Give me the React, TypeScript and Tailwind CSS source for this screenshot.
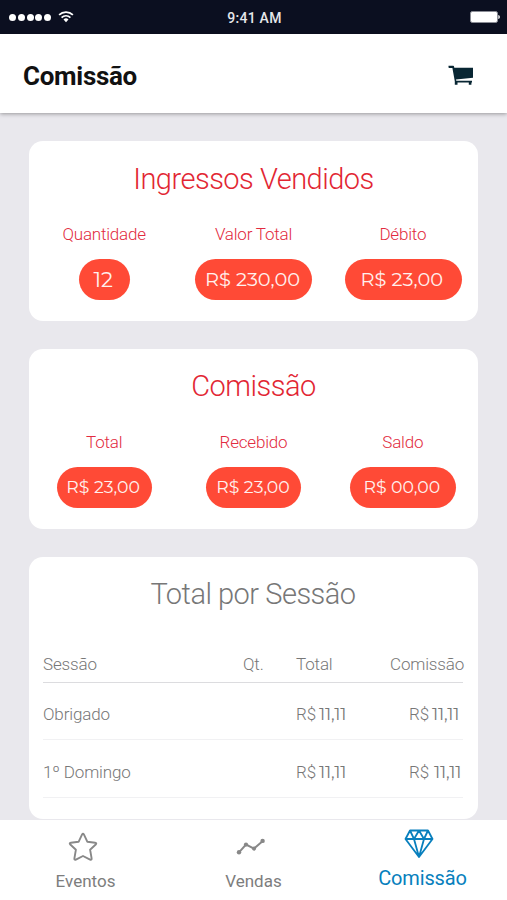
interface Stat {
  label: string;
  value: string;
  pill: string;
}

interface StatCardProps {
  title: string;
  titleClass: string;
  stats: Stat[];
}

interface Session {
  name: string;
  total: string;
  commission: string;
  gap: string;
}

const sold: Stat[] = [
  { label: "Quantidade", value: "12", pill: "w-[51px] text-[21px] pr-[3px]" },
  { label: "Valor Total", value: "R$ 230,00", pill: "w-[117px] text-[19.4px] pr-[3px]" },
  { label: "Débito", value: "R$ 23,00", pill: "w-[117px] text-[19.4px] pr-[3px]" },
];

const commission: Stat[] = [
  { label: "Total", value: "R$ 23,00", pill: "w-[95px] text-[17.3px] pb-0.5 pr-[3px]" },
  { label: "Recebido", value: "R$ 23,00", pill: "w-[95px] text-[17.3px] pb-0.5 pr-[2px]" },
  { label: "Saldo", value: "R$ 00,00", pill: "w-[106px] text-[17.3px] pb-0.5 pr-[3px]" },
];

const sessions: Session[] = [
  { name: "Obrigado", total: "11,11", commission: "11,11", gap: "gap-[3px]" },
  { name: "1º Domingo", total: "11,11", commission: "11,11", gap: "gap-[5px]" },
];

function StatusBar() {
  return (
    <div className="h-[34px] shrink-0 bg-[#0b0f20] grid grid-cols-3 items-center pl-[9px] pr-[7px] text-white">
      <div className="flex items-center gap-[1.75px]">
        {[0, 1, 2, 3, 4].map((dot) => (
          <span key={dot} className="size-[7px] rounded-full bg-white" />
        ))}
        <svg className="ml-[5px] -mt-px" width="16" height="13" viewBox="0 0 16 13" fill="none" stroke="currentColor" strokeWidth="1.7">
          <path d="M1.1 4.9a9.8 9.8 0 0 1 13.8 0" />
          <path d="M3.6 7.6a6.2 6.2 0 0 1 8.8 0" />
          <path d="M8 12.3 5.5 9.6a3.5 3.5 0 0 1 5 0z" fill="currentColor" stroke="none" />
        </svg>
      </div>
      <span className="text-center text-[14px] leading-4 font-medium pt-0.5 tracking-[0.25px] text-[#e6e7ea]">9:41 AM</span>
      <svg className="justify-self-end" width="30" height="12" viewBox="0 0 30 12">
        <rect x="0.5" y="0.5" width="27" height="11" rx="1.8" fill="#fff" stroke="#8b8d96" />
        <path d="M28.3 4v4c2.1-.8 2.1-3.2 0-4z" fill="#fff" />
      </svg>
    </div>
  );
}

function StatCard({ title, titleClass, stats }: StatCardProps) {
  return (
    <section className="h-[180px] shrink-0 bg-white rounded-[14px]">
      <h2 className={`h-[55px] text-center font-light text-[29px] leading-[34px] tracking-[-0.5px] text-[#e22633] ${titleClass}`}>
        {title}
      </h2>
      <div className="grid grid-cols-3 mt-7 pl-px">
        {stats.map((stat) => (
          <div key={stat.label} className="flex flex-col items-center">
            <span className="text-[17px] leading-5 font-light tracking-[-0.2px] text-[#e22b40] pr-px">{stat.label}</span>
            <span
              className={`mt-[15px] h-[41px] rounded-full bg-[#ff4a36] text-[#fff1ee] flex items-center justify-center whitespace-nowrap font-['Montserrat','Inter',sans-serif] ${stat.pill}`}
            >
              {stat.value}
            </span>
          </div>
        ))}
      </div>
    </section>
  );
}

function Amount({ value, gap }: { value: string; gap: string }) {
  return (
    <span className={`flex items-baseline ${gap}`}>
      R$<span className="text-[17px] font-normal font-['Montserrat','Inter',sans-serif]">{value}</span>
    </span>
  );
}

function SessionCard() {
  return (
    <section className="h-[262px] shrink-0 bg-white rounded-[14px] pt-5 pl-[14px] pr-[15px] text-[#777]">
      <h2 className="text-center font-light text-[29px] leading-[34px] tracking-[-0.5px]">Total por Sessão</h2>
      <div className="font-light text-[17px] leading-5 tracking-[-0.15px]">
        <div className="mt-[43px] h-[29px] grid grid-cols-[200px_53px_94px_1fr] border-b border-[#dcdcdf] whitespace-nowrap">
          <span>Sessão</span>
          <span>Qt.</span>
          <span>Total</span>
          <span>Comissão</span>
        </div>
        {sessions.map((session, i) => (
          <div
            key={session.name}
            className={`grid grid-cols-[253px_113px_1fr] items-center pt-[6px] border-b border-[#f1f1f3] whitespace-nowrap ${
              i === 0 ? "h-[57px]" : "h-[58px]"
            }`}
          >
            <span>{session.name}</span>
            <Amount value={session.total} gap="gap-[3px]" />
            <Amount value={session.commission} gap={session.gap} />
          </div>
        ))}
      </div>
    </section>
  );
}

function TabBar() {
  return (
    <nav className="h-20 shrink-0 bg-white grid grid-cols-3 text-[17px] leading-5 text-[#7d7d7d]">
      <div className="flex flex-col items-center pt-3 pl-0.5">
        <svg className="-ml-[6px]" width="30" height="30" viewBox="0 0 30 30" fill="none" stroke="#888" strokeWidth="1.9" strokeLinejoin="round">
          <path d="M14 2.6q1-1.9 2 0l3.4 7.2 7.7.9q2 .3.6 1.8l-5.6 5.2 1.5 8.6q.3 2-1.5 1.3L15 24l-7.1 3.6q-1.8.7-1.5-1.3l1.5-8.6-5.6-5.2q-1.4-1.5.6-1.8l7.7-.9z" />
        </svg>
        <span className="mt-[9px]">Eventos</span>
      </div>
      <div className="flex flex-col items-center pt-[17px]">
        <svg className="-ml-[7px]" width="30" height="20" viewBox="0 0 30 20" fill="#888">
          <path d="m4 15.3 7-7.7 8 4 8.8-7.7" fill="none" stroke="#888" strokeWidth="2" />
          <circle cx="4" cy="15.3" r="2.2" />
          <circle cx="11" cy="7.6" r="2.1" />
          <circle cx="19" cy="11.6" r="2.1" />
          <circle cx="27.6" cy="3.9" r="2.2" />
        </svg>
        <span className="mt-[14px]">Vendas</span>
      </div>
      <div className="flex flex-col items-center pt-2">
        <svg className="-ml-[7px] text-[#087fbd]" width="30" height="32" viewBox="0 0 30 32" fill="none" stroke="currentColor" strokeWidth="1.8" strokeLinejoin="round">
          <path d="M6 2.5h18l4.5 8.5L15 29 1.5 11zM1.5 11h27M10 11l5 18 5-18M6 2.5 10 11l5-8.5 5 8.5 4-8.5" />
        </svg>
        <span className="mt-2 text-[20px] leading-5 tracking-[-0.15px] text-[#087fbd]">Comissão</span>
      </div>
    </nav>
  );
}

export default function App() {
  return (
    <div className="h-[900px] w-[507px] overflow-hidden bg-[#e9e8ed] flex flex-col font-['Roboto',sans-serif]">
      <StatusBar />
      <header className="h-[79px] shrink-0 bg-white flex items-center justify-between pl-[23px] pr-[33px] pt-1 shadow-[0_1px_4px_rgba(0,0,0,0.35)]">
        <h1 className="text-[26px] leading-8 font-bold tracking-[-0.3px] text-[#111]">Comissão</h1>
        <svg width="26" height="22" viewBox="0 0 26 22" fill="#082633">
          <path d="M.5.8h4.8q.6 0 .8 1l.2.9H25v10L8 14.5l.3 1.2H24v1.7h-.6v2.3h-2.6v-2.3H9.5v2.3H6.8v-3.5L4.4 3H1.2Q.5 3 .5 2.2z" />
        </svg>
      </header>
      <main className="h-[707px] shrink-0 flex flex-col gap-7 pt-7 px-[29px]">
        <StatCard title="Ingressos Vendidos" titleClass="pt-[21px]" stats={sold} />
        <StatCard title="Comissão" titleClass="pt-5" stats={commission} />
        <SessionCard />
      </main>
      <TabBar />
    </div>
  );
}
